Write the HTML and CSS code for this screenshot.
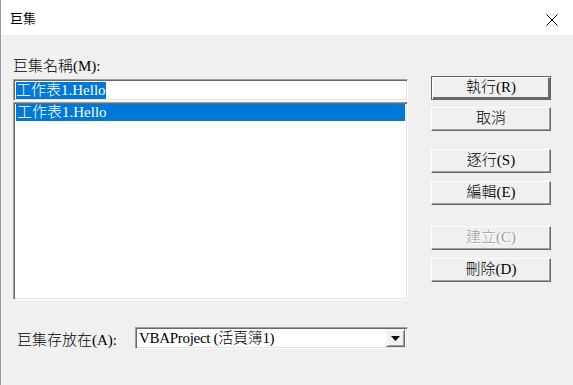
FILE: index.html
```html
<!DOCTYPE html>
<html lang="zh-Hant">

<head>
    <meta charset="UTF-8">
    <meta name="viewport" content="width=device-width, initial-scale=1.0">
    <title>巨集</title>
    <link rel="stylesheet" href="styles.css">
</head>

<body>
    <div class="window">
        <div class="titlebar">
            <span class="title">巨集</span>
            <span class="close">
                <svg width="12" height="12" viewBox="0 0 12 12">
                    <path d="M0.5 0.5 L11.5 11.5 M11.5 0.5 L0.5 11.5" stroke="#000" stroke-width="1" fill="none" />
                </svg>
            </span>
        </div>

        <div class="content">
            <div class="main">
                <div class="left">
                    <div class="label">巨集名稱(M):</div>
                    <div class="textbox"><span class="sel">工作表1.Hello</span></div>
                    <div class="listbox">
                        <div class="item selected">工作表1.Hello</div>
                    </div>
                </div>

                <div class="buttons">
                    <div class="btn-group first">
                        <div class="btn default">執行(R)</div>
                        <div class="btn">取消</div>
                    </div>
                    <div class="btn-group">
                        <div class="btn">逐行(S)</div>
                        <div class="btn">編輯(E)</div>
                    </div>
                    <div class="btn-group last">
                        <div class="btn disabled">建立(C)</div>
                        <div class="btn">刪除(D)</div>
                    </div>
                </div>
            </div>

            <div class="store-row">
                <span class="store-label">巨集存放在(A):</span>
                <div class="combo">
                    <span class="combo-text">VBAProject (活頁簿1)</span>
                    <span class="combo-btn">
                        <svg width="9" height="5" viewBox="0 0 9 5">
                            <path d="M0 0 H9 L4.5 5 Z" fill="#000" />
                        </svg>
                    </span>
                </div>
            </div>
        </div>
    </div>
</body>

</html>
```

FILE: styles.css
```css
body {
    margin: 0;
    background-color: #f0f0f0;
    font-family: "Liberation Serif", "Noto Sans CJK TC", serif;
    font-size: 15px;
    font-weight: 300;
    color: #000;
}

.window {
    width: 573px;
    height: 385px;
    box-sizing: border-box;
    border-left: 1px solid #9a9a9a;
    overflow: hidden;
}

.titlebar {
    height: 35px;
    background: #fff;
    display: flex;
    align-items: center;
    justify-content: space-between;
    padding: 0 15px 0 9px;
}

.title {
    font-family: "Noto Sans CJK TC", sans-serif;
    font-size: 13px;
    font-weight: 400;
    line-height: 16px;
    margin-top: 1px;
}

.close {
    display: flex;
    margin-top: 5px;
}

.content {
    padding: 20px 0 0 12px;
}

.main {
    display: flex;
    gap: 23px;
}

.left {
    width: 395px;
}

.label {
    height: 22px;
    line-height: 22px;
    margin-bottom: 2px;
}

.textbox,
.listbox {
    box-sizing: border-box;
    background: #fff;
    border: 1px solid;
    border-color: #a0a0a0 #fff #fff #a0a0a0;
    box-shadow: inset 1px 1px #696969, inset -1px -1px #e3e3e3;
}

.textbox {
    height: 22px;
    padding: 2px 0 0 2px;
}

.sel {
    display: inline-block;
    background: #0078d7;
    color: #fff;
    line-height: 17px;
    height: 17px;
}

.listbox {
    height: 198px;
    margin-top: 1px;
    padding: 1px 2px 0 2px;
}

.item {
    height: 17px;
    line-height: 17px;
    padding-left: 1px;
}

.item.selected {
    background: #0078d7;
    color: #fff;
}

.buttons {
    width: 120px;
    padding-top: 21px;
}

.btn-group {
    display: flex;
    flex-direction: column;
    gap: 8px;
    margin-top: 18px;
}

.btn-group.first {
    gap: 7px;
    margin-top: 0;
}

.btn-group.last {
    margin-top: 21px;
}

.btn {
    box-sizing: border-box;
    height: 24px;
    line-height: 21px;
    text-align: center;
    background: #f0f0f0;
    border: 1px solid;
    border-color: #fff #696969 #696969 #fff;
    box-shadow: inset -1px -1px #a0a0a0;
}

.btn.default {
    border: 1px solid #646464;
    box-shadow: inset 1px 1px #fff, inset -2px -2px #696969;
}

.btn.disabled {
    color: #a0a0a0;
    text-shadow: 1px 1px #fff;
}

.store-row {
    display: flex;
    align-items: center;
    margin-top: 27px;
}

.store-label {
    width: 118px;
    padding-left: 4px;
}

.combo {
    box-sizing: border-box;
    width: 273px;
    height: 22px;
    display: flex;
    align-items: center;
    justify-content: space-between;
    background: #fff;
    border: 1px solid;
    border-color: #a0a0a0 #fff #fff #a0a0a0;
    box-shadow: inset 1px 1px #696969, inset -1px -1px #e3e3e3;
    padding: 2px 2px 2px 3px;
}

.combo-text {
    line-height: 17px;
    letter-spacing: -0.3px;
}

.combo-btn {
    box-sizing: border-box;
    width: 19px;
    height: 18px;
    display: flex;
    align-items: center;
    justify-content: center;
    background: #f0f0f0;
    border: 1px solid;
    border-color: #f0f0f0 #696969 #696969 #f0f0f0;
    box-shadow: inset 1px 1px #fff, inset -1px -1px #a0a0a0;
}
```
